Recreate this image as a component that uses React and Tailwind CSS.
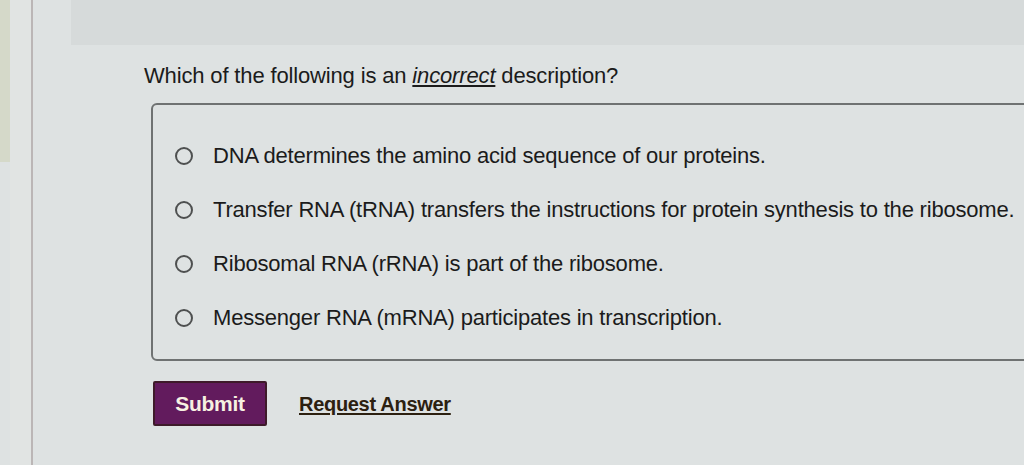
export default function App() {
  const options = [
    "DNA determines the amino acid sequence of our proteins.",
    "Transfer RNA (tRNA) transfers the instructions for protein synthesis to the ribosome.",
    "Ribosomal RNA (rRNA) is part of the ribosome.",
    "Messenger RNA (mRNA) participates in transcription.",
  ];
  return (
    <div
      className="w-[1024px] h-[465px] bg-[#dee2e2] flex overflow-hidden text-[#1b1b1b]"
      style={{ fontFamily: '"Liberation Sans", Arial, sans-serif' }}
    >
      <div className="w-[10px] flex flex-col shrink-0">
        <div className="h-[162px] bg-[#d5d9c9]" />
      </div>
      <div className="w-[21px] shrink-0 bg-[#e1e4e3]" />
      <div className="w-[2px] shrink-0 bg-[#bbb6b6]" />
      <div className="flex-1 flex flex-col min-w-0">
        <div className="h-[45px] ml-[38px] bg-[#d6dada] shrink-0" />
        <p className="ml-[111px] mt-[19px] text-[22px] leading-[24px] tracking-[-0.15px]">
          Which of the following is an <span className="italic underline underline-offset-2">incorrect</span> description?
        </p>
        <div className="ml-[118px] mt-[15px] w-[900px] shrink-0 border-2 border-[#6f7272] rounded-[6px] pt-[24px] pb-[14px] pl-[22px] flex flex-col">
          {options.map((o) => (
            <div key={o} className="h-[54px] flex items-center">
              <span className="w-[18px] h-[18px] rounded-full border-2 border-[#4e5050] shrink-0" />
              <span className="ml-[20px] text-[22px] leading-[24px] whitespace-nowrap tracking-[-0.2px]">{o}</span>
            </div>
          ))}
        </div>
        <div className="ml-[120px] mt-[20px] flex items-center">
          <button className="w-[114px] h-[45px] bg-[#621b5d] border-2 border-[#3e1a2a] rounded-[2px] text-[#f7f1e1] text-[21px] font-bold tracking-[-0.3px]">
            Submit
          </button>
          <a className="ml-[32px] text-[20px] font-bold text-[#2c2010] underline underline-offset-2 tracking-[-0.3px]">
            Request Answer
          </a>
        </div>
      </div>
    </div>
  );
}
